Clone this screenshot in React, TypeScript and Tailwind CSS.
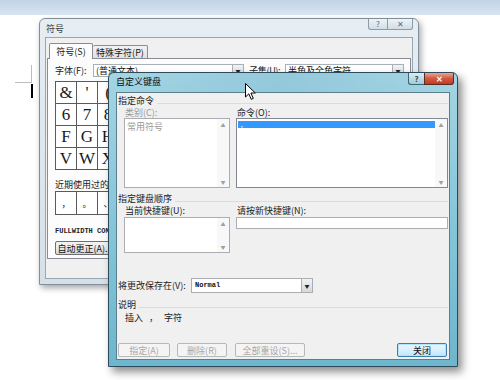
import React from "react";

const ascii = Array.from({ length: 16 }, (_, i) => i);

function Btn({
  children,
  disabled,
  primary,
  className = "",
}: {
  children: React.ReactNode;
  disabled?: boolean;
  primary?: boolean;
  className?: string;
}) {
  const tone = disabled
    ? "border-[#b5b9bc] bg-[#f4f4f4] text-[#a7a7a7]"
    : primary
      ? "border-[#3c7fb1] bg-gradient-to-b from-[#eaf6fd] via-[#d9f0fc] to-[#bee6fd] text-[#111] shadow-[inset_0_0_0_1px_#b6e3f9]"
      : "border-[#707070] bg-gradient-to-b from-[#f2f2f2] via-[#ebebeb] to-[#d6d6d6] text-[#111]";
  return (
    <div
      className={`flex h-[14px] items-center justify-center whitespace-nowrap rounded-[2px] border text-[9px] leading-none ${tone} ${className}`}
    >
      {children}
    </div>
  );
}

function ScrollCol({ className = "" }: { className?: string }) {
  return (
    <div
      className={`flex w-[12px] flex-col items-center justify-between bg-[#f8f8f8] py-[3px] text-[5px] leading-none text-[#a0a0a0] ${className}`}
    >
      <span>▲</span>
      <span>▼</span>
    </div>
  );
}

function GroupHeader({ title, className = "" }: { title: string; className?: string }) {
  return (
    <div className={`flex h-[10px] items-end ${className}`}>
      <span className="text-[9px] leading-[9px] text-[#1a1a1a]">{title}</span>
      <div className="mb-[1px] ml-[3px] h-px flex-1 bg-[#d8dde0]" />
    </div>
  );
}

function DropArrow({ className = "" }: { className?: string }) {
  return (
    <div
      className={`flex w-[11px] items-center justify-center border-l border-[#a9b1b8] bg-gradient-to-b from-[#f2f2f2] to-[#d8d8d8] text-[5px] leading-none text-[#222] ${className}`}
    >
      ▼
    </div>
  );
}

// the front window covers everything right of the third column, so only those cells get a glyph
const recent = ["，", "。", "、"];

function SymbolWindow() {
  return (
    <div className="absolute left-[39px] top-[18px] flex h-[267px] w-[380px] flex-col rounded-t-[6px] border border-[#7f8f9c] bg-gradient-to-b from-[#e6edf3] to-[#d6e0e8] px-[5px] pb-[5px] shadow-[2px_3px_6px_rgba(0,0,0,0.35)]">
      <div className="flex h-[18px] items-start justify-between">
        <span className="pl-[1px] pt-[5px] text-[9px] leading-[10px] text-[#3a3a3a]">符号</span>
        <div className="flex">
          <div className="flex h-[11px] w-[19px] items-center justify-center rounded-bl-[3px] border border-r-0 border-t-0 border-[#8d9ba7] bg-gradient-to-b from-[#eef3f7] to-[#d3dde5] text-[8px] leading-none text-[#5c6a76]">
            ?
          </div>
          <div className="flex h-[11px] w-[26px] items-center justify-center rounded-br-[3px] border border-t-0 border-[#8d9ba7] bg-gradient-to-b from-[#eef3f7] to-[#d3dde5] text-[8px] leading-none text-[#5c6a76]">
            ✕
          </div>
        </div>
      </div>
      <div className="flex flex-1 flex-col border border-[#97a6b1] bg-[#f0f0f0] px-[1px] pt-[4px]">
        <div className="flex h-[16px] items-end pl-[2px]">
          <div className="z-10 -mb-px flex h-[16px] w-[44px] items-center justify-center rounded-t-[2px] border border-b-0 border-[#898c95] bg-[#fcfcfc] text-[9px] leading-none text-[#1a1a1a]">
            符号(S)
          </div>
          <div className="flex h-[13px] w-[55px] items-center justify-center rounded-t-[2px] border border-b-0 border-l-0 border-[#898c95] bg-gradient-to-b from-[#f2f2f2] to-[#e1e1e1] text-[9px] leading-none text-[#1a1a1a]">
            特殊字符(P)
          </div>
        </div>
        <div className="flex h-[201px] flex-col border border-[#898c95] bg-[#fcfcfc] pl-[7px]">
          <div className="mt-[5px] flex h-[13px] items-center whitespace-nowrap">
            <span className="w-[38px] text-[9px] leading-none text-[#1a1a1a]">字体(F):</span>
            <div className="flex h-[13px] w-[151px] border border-[#a9b1b8] bg-white">
              <span className="flex-1 pl-[2px] text-[9px] leading-[11px] text-[#111]">(普通文本)</span>
              <DropArrow />
            </div>
            <span className="ml-[5px] w-[36px] text-[9px] leading-none tracking-[-0.3px] text-[#1a1a1a]">子集(U):</span>
            <div className="flex h-[13px] w-[119px] border border-[#a9b1b8] bg-white">
              <span className="flex-1 pl-[2px] text-[9px] leading-[11px] text-[#111]">半角及全角字符</span>
              <DropArrow />
            </div>
          </div>
          <div className="mt-[4px] flex flex-col border-l border-t border-[#5a5a5a]">
            {[0x26, 0x36, 0x46, 0x56].map((base) => (
              <div key={base} className="flex">
                {ascii.map((i) => (
                  <div
                    key={i}
                    className="flex h-[22px] w-[21px] items-center justify-center border-b border-r border-[#5a5a5a] bg-white font-['Liberation_Serif',serif] text-[17px] leading-none text-[#1a1a1a]"
                  >
                    {i < 3 ? String.fromCharCode(base + i) : ""}
                  </div>
                ))}
              </div>
            ))}
          </div>
          <span className="mt-[10px] whitespace-nowrap text-[9px] leading-[10px] text-[#1a1a1a]">近期使用过的符号(R):</span>
          <div className="mt-[1px] flex border-l border-t border-[#5a5a5a]">
            {ascii.map((i) => (
              <div
                key={i}
                className="flex h-[23px] w-[21px] items-center justify-center border-b border-r border-[#5a5a5a] bg-white text-[9px] leading-none text-[#1a1a1a]"
              >
                {recent[i] ?? ""}
              </div>
            ))}
          </div>
          <span className="mt-[12px] whitespace-nowrap font-['Liberation_Mono',monospace] text-[7px] font-bold leading-[8px] text-[#222]">
            FULLWIDTH COMMA
          </span>
          <Btn className="mt-[6px] w-[60px]">自动更正(A)...</Btn>
        </div>
      </div>
    </div>
  );
}

function KeyboardWindow() {
  return (
    <div className="absolute left-[108px] top-[72px] flex h-[295px] w-[350px] flex-col rounded-t-[6px] border border-[#2c4a5a] bg-gradient-to-b from-[#a3d5e3] via-[#86c6d9] to-[#6db6cd] px-[7px] pb-[6px] shadow-[4px_5px_8px_rgba(0,0,0,0.45)]">
      <div className="flex h-[19px] items-start justify-between bg-gradient-to-r from-transparent via-[#7fb7d0]/40 to-transparent">
        <span className="pt-[4px] text-[9px] leading-[10px] text-[#0d0d0d]">自定义键盘</span>
        <div className="-mr-[4px] flex">
          <div className="flex h-[12px] w-[16px] items-center justify-center rounded-bl-[3px] border border-r-0 border-t-0 border-[#3f6473] bg-gradient-to-b from-[#d9eef4] to-[#9fcbd8] text-[8px] font-bold leading-none text-[#2f4a56]">
            ?
          </div>
          <div className="flex h-[12px] w-[30px] items-center justify-center rounded-br-[3px] border border-t-0 border-[#5b2a22] bg-gradient-to-b from-[#e9a394] via-[#d2573f] to-[#c23a22] text-[8px] font-bold leading-none text-white">
            ✕
          </div>
        </div>
      </div>
      <div className="flex flex-1 flex-col whitespace-nowrap border border-[#5b7d8c] bg-[#f0f0f0] px-[1px] pt-[2px]">
        <GroupHeader title="指定命令" />
        <div className="ml-[6px] mt-[3px] flex gap-[6px]">
          <div className="flex w-[106px] flex-col">
            <span className="h-[10px] pl-[1px] text-[9px] leading-[9px] text-[#9a9a9a]">类别(C):</span>
            <div className="flex h-[70px] border border-[#abadb3] bg-white">
              <span className="flex-1 pl-[2px] pt-[3px] text-[9px] leading-[9px] text-[#9a9a9a]">常用符号</span>
              <ScrollCol />
            </div>
          </div>
          <div className="flex flex-1 flex-col">
            <span className="h-[10px] pl-[1px] text-[9px] leading-[9px] text-[#1a1a1a]">命令(O):</span>
            <div className="flex h-[70px] border border-[#828790] bg-white">
              <div className="flex-1 pl-[1px] pt-[2px]">
                <div className="flex h-[7px] items-center bg-[#3399ff] pl-[2px] text-[7px] leading-none text-white">，</div>
              </div>
              <ScrollCol />
            </div>
          </div>
        </div>
        <GroupHeader title="指定键盘顺序" className="mt-[5px]" />
        <div className="ml-[6px] mt-[3px] flex gap-[6px]">
          <div className="flex w-[106px] flex-col">
            <span className="h-[10px] pl-[1px] text-[9px] leading-[9px] text-[#1a1a1a]">当前快捷键(U):</span>
            <div className="mt-[1px] flex h-[36px] border border-[#abadb3] bg-white">
              <div className="flex-1" />
              <ScrollCol />
            </div>
          </div>
          <div className="flex flex-1 flex-col">
            <span className="h-[10px] pl-[1px] text-[9px] leading-[9px] text-[#1a1a1a]">请按新快捷键(N):</span>
            <div className="mt-[1px] h-[12px] border border-[#abadb3] bg-white" />
          </div>
        </div>
        <div className="mt-[25px] flex h-[15px] items-center">
          <span className="w-[73px] text-[9px] leading-none text-[#1a1a1a]">将更改保存在(V):</span>
          <div className="flex h-[15px] w-[122px] border border-[#abadb3] bg-white">
            <span className="flex-1 pl-[3px] font-['Liberation_Mono',monospace] text-[7px] font-bold leading-[13px] text-[#111]">Normal</span>
            <DropArrow />
          </div>
        </div>
        <GroupHeader title="说明" className="mt-[6px]" />
        <div className="ml-[7px] mt-[3px] flex h-[10px] items-center gap-[6px] text-[9px] leading-none text-[#1a1a1a]">
          <span>插入</span>
          <span>，</span>
          <span>字符</span>
        </div>
        <div className="mt-[21px] flex items-center">
          <Btn disabled className="w-[52px]">指定(A)</Btn>
          <Btn disabled className="ml-[7px] w-[50px]">删除(R)</Btn>
          <Btn disabled className="ml-[8px] w-[70px]">全部重设(S)...</Btn>
          <div className="flex-1" />
          <Btn primary className="mr-[1px] w-[50px]">关闭</Btn>
        </div>
      </div>
    </div>
  );
}

export default function App() {
  return (
    <div className="relative h-[380px] w-[500px] overflow-hidden bg-white font-['Noto_Sans_CJK_SC',sans-serif]">
      <div className="h-[15px] bg-gradient-to-b from-[#c2d3e7] to-[#d8e4f1]" />
      <div className="ml-[15px] mt-[50px] h-[18px] w-[17px] border-b border-r border-[#bdbdbd]" />
      <div className="ml-[31px] mt-[1px] h-[14px] w-[2px] bg-black" />
      <SymbolWindow />
      <KeyboardWindow />
      <svg className="absolute left-[245px] top-[83px]" width="12" height="18" viewBox="0 0 12 18">
        <path
          d="M0.5 0.5 L0.5 14 L3.8 10.8 L6.2 16.3 L8.3 15.4 L5.9 10 L10.3 10 Z"
          fill="#fff"
          stroke="#000"
          strokeWidth="1"
          strokeLinejoin="round"
        />
      </svg>
    </div>
  );
}
